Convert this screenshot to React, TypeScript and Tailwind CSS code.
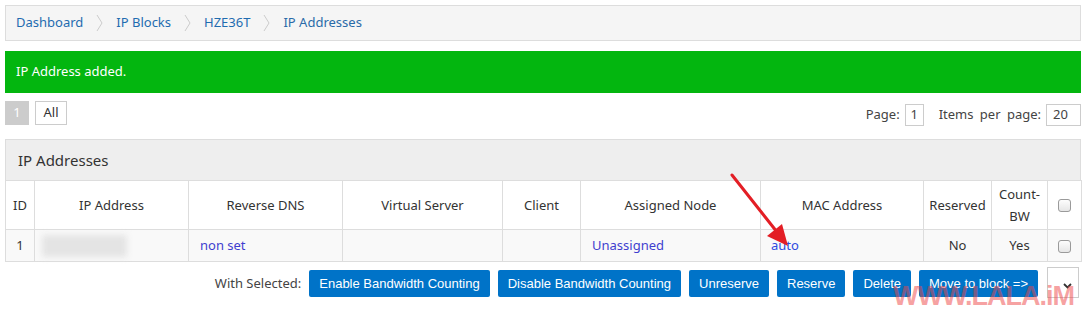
import React from 'react';

const Chevron: React.FC = () => (
  <svg width="7" height="18" viewBox="0 0 7 18" className="mx-[13px]">
    <path d="M1 1 L6 9 L1 17" fill="none" stroke="#ccc" strokeWidth="1" />
  </svg>
);

const Check: React.FC = () => (
  <span className="inline-block w-[13px] h-[13px] rounded-[3px] border border-[#9a9a9a] bg-gradient-to-b from-[#fdfdfd] to-[#e6e6e6] align-middle" />
);

const crumbs = ['Dashboard', 'IP Blocks', 'HZE36T', 'IP Addresses'];

const columns = [
  { label: 'ID', w: 'w-[29px]' },
  { label: 'IP Address', w: 'w-[154px]' },
  { label: 'Reverse DNS', w: 'w-[154px]' },
  { label: 'Virtual Server', w: 'w-[160px]' },
  { label: 'Client', w: 'w-[78px]' },
  { label: 'Assigned Node', w: 'w-[180px]' },
  { label: 'MAC Address', w: 'w-[163px]' },
  { label: 'Reserved', w: 'w-[68px]' },
];

const actions = [
  'Enable Bandwidth Counting',
  'Disable Bandwidth Counting',
  'Unreserve',
  'Reserve',
  'Delete',
  'Move to block =>',
];

export default function App() {
  return (
    <div className="relative w-[1086px] h-[314px] overflow-hidden bg-white text-[#333] text-[13px] font-['Noto_Sans',sans-serif]">
      <div className="px-[5px] pt-[5px]">
        {/* Breadcrumb */}
        <div className="h-[36px] flex items-center border border-[#ddd] bg-[#f5f5f5] pl-[10px]">
          {crumbs.map((c, i) => (
            <React.Fragment key={c}>
              <span className={i === crumbs.length - 1 ? 'text-[#2a6ba8]' : 'text-[#1f6cb0]'}>{c}</span>
              {i < crumbs.length - 1 && <Chevron />}
            </React.Fragment>
          ))}
        </div>

        {/* Success message */}
        <div className="mt-[10px] h-[42px] flex items-center bg-[#03b60f] text-white pl-[11px]">
          IP Address added.
        </div>

        {/* Pagination */}
        <div className="mt-[8px] flex justify-between items-start">
          <div className="flex gap-[6px]">
            <span className="w-[24px] h-[24px] flex items-center justify-center bg-[#cccccc] text-white">1</span>
            <span className="w-[32px] h-[24px] flex items-center justify-center border border-[#cccccc]">All</span>
          </div>
          <div className="flex items-center mt-[3px] text-[#444]">
            <span>Page:</span>
            <span className="ml-[5px] w-[19px] h-[22px] flex items-center justify-center border border-[#ccc]">1</span>
            <span className="ml-[15px] [word-spacing:3px]">Items per page:</span>
            <span className="ml-[5px] w-[35px] h-[22px] flex items-center pl-[6px] border border-[#ccc]">20</span>
          </div>
        </div>

        {/* Panel */}
        <div className="mt-[13px]">
          <div className="h-[41px] flex items-center bg-[#eeeeee] border border-b-0 border-[#ddd] pl-[12px] text-[15px] text-[#333]">
            IP Addresses
          </div>
          <table className="w-full table-fixed border-collapse">
            <thead>
              <tr className="h-[49px]">
                {columns.map((c) => (
                  <th key={c.label} className={`${c.w} border border-[#ddd] font-normal text-center leading-[18px]`}>
                    {c.label}
                  </th>
                ))}
                <th className="w-[56px] border border-[#ddd] font-normal text-center leading-[22px]">
                  Count-
                  <br />
                  BW
                </th>
                <th className="w-[34px] border border-[#ddd] text-center">
                  <Check />
                </th>
              </tr>
            </thead>
            <tbody>
              <tr className="h-[32px] bg-[#f9f9f9]">
                <td className="border border-[#ddd] text-center">1</td>
                <td className="border border-[#ddd] pl-[7px]">
                  <div className="w-[85px] h-[22px] bg-[#e4e4e4] blur-[3px]" />
                </td>
                <td className="border border-[#ddd] pl-[11px] text-[#3f3fcf]">non set</td>
                <td className="border border-[#ddd]" />
                <td className="border border-[#ddd]" />
                <td className="border border-[#ddd] pl-[11px] text-[#3f3fcf]">Unassigned</td>
                <td className="border border-[#ddd] pl-[10px] text-[#2f4be0]">auto</td>
                <td className="border border-[#ddd] text-center">No</td>
                <td className="border border-[#ddd] text-center">Yes</td>
                <td className="border border-[#ddd] text-center">
                  <Check />
                </td>
              </tr>
            </tbody>
          </table>
        </div>
      </div>

      {/* Bulk actions */}
      <div className="mt-[8px] flex items-start justify-end pr-[7px]">
        <span className="mr-[8px] mt-[4px] text-[#444]">With Selected:</span>
        {actions.map((a) => (
          <button
            key={a}
            className="mr-[8px] h-[27px] px-[10px] rounded-[2px] bg-[#0073c8] text-white text-[13px] font-['Liberation_Sans',Arial,sans-serif]"
          >
            {a}
          </button>
        ))}
        <span className="ml-[1px] w-[32px] h-[31px] -mt-[3px] flex items-end justify-end pr-[6px] pb-[8px] border border-[#ccc]">
          <svg width="9" height="6" viewBox="0 0 9 6">
            <path d="M1 1 L4.5 4.5 L8 1" fill="none" stroke="#333" strokeWidth="1.8" />
          </svg>
        </span>
      </div>

      {/* Annotation arrow */}
      <svg className="absolute left-0 top-0 pointer-events-none" width="1086" height="314">
        <line x1="732" y1="175" x2="777" y2="232" stroke="#e31e25" strokeWidth="3" strokeLinecap="round" />
        <polygon points="788,246 767,236 782,224" fill="#e31e25" />
      </svg>

      {/* Watermark */}
      <div className="absolute left-[893px] top-[280px] text-[27px] leading-[32px] font-bold tracking-[-1px] text-[rgba(238,70,70,0.5)] font-['Liberation_Sans',Arial,sans-serif] pointer-events-none">
        WWW.LALA.iM
      </div>
    </div>
  );
}
